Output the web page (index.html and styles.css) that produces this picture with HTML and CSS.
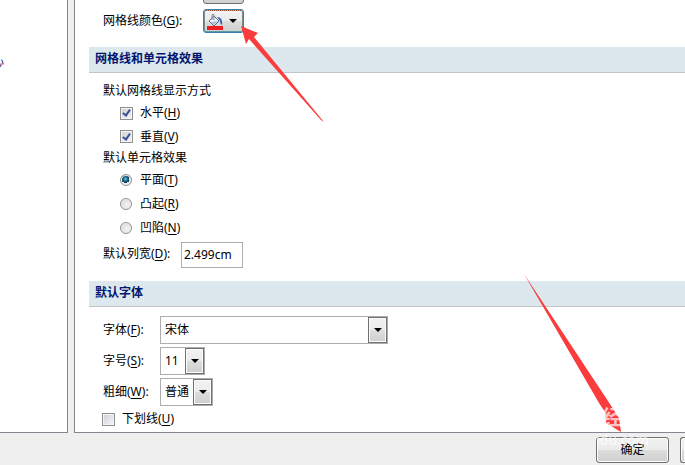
FILE: index.html
```html
<!DOCTYPE html>
<html lang="zh-CN">
    <head>
        <meta charset="utf-8">
        <title>选项</title>
        <link rel="stylesheet" href="styles.css">
    </head>
    <body>
        <div class="main">
            <div class="sidebar">
                <a class="nav-link" href="#">心</a>
            </div>
            <form class="panel" id="options">
                <div class="row color-row">
                    <span class="label color-label">网格线颜色(<u>G</u>):</span>
                    <div class="color-buttons">
                        <button type="button" class="color-button" aria-label="背景色"></button>
                        <button type="button" class="color-button focused" aria-label="网格线颜色">
                            <svg width="16" height="17" viewBox="0 0 16 17">
                                <path d="M2 8 L7 3 L12 8 L7 13 Z" fill="#eef4fb" stroke="#5b6c88"/>
                                <path d="M4 9 L7 12 L11 8 Z" fill="#a9bdd8"/>
                                <path d="M5 7 V2 Q6 0 7 2 V7" fill="none" stroke="#7c8694"/>
                                <path d="M10 4 Q16 4 15 12 Q13 11 13 8 Z" fill="#3763b5"/>
                                <rect x="0" y="13" width="16" height="4" fill="#ed1c24"/>
                            </svg>
                            <span class="arrow"></span>
                        </button>
                    </div>
                </div>

                <h2>网格线和单元格效果</h2>
                <div class="section effects">
                    <div class="group-label">默认网格线显示方式</div>
                    <label class="option"><input type="checkbox" checked><span>水平(<u>H</u>)</span></label>
                    <label class="option"><input type="checkbox" checked><span>垂直(<u>V</u>)</span></label>
                    <div class="group-label">默认单元格效果</div>
                    <label class="option"><input type="radio" name="effect" checked><span>平面(<u>T</u>)</span></label>
                    <label class="option"><input type="radio" name="effect"><span>凸起(<u>R</u>)</span></label>
                    <label class="option"><input type="radio" name="effect"><span>凹陷(<u>N</u>)</span></label>
                    <div class="row">
                        <label class="label width-label" for="colwidth">默认列宽(<u>D</u>):</label>
                        <input type="text" id="colwidth" value="2.499cm">
                    </div>
                </div>

                <h2>默认字体</h2>
                <div class="section fonts">
                    <div class="row">
                        <label class="label font-label" for="font">字体(<u>F</u>):</label>
                        <div class="combo wide"><select id="font"><option>宋体</option></select></div>
                    </div>
                    <div class="row">
                        <label class="label font-label" for="size">字号(<u>S</u>):</label>
                        <div class="combo size"><select id="size"><option>11</option></select></div>
                    </div>
                    <div class="row">
                        <label class="label font-label" for="weight">粗细(<u>W</u>):</label>
                        <div class="combo weight"><select id="weight"><option>普通</option></select></div>
                    </div>
                    <label class="option underline"><input type="checkbox"><span>下划线(<u>U</u>)</span></label>
                </div>
            </form>
        </div>
        <div class="footer">
            <button type="submit" form="options">确定</button>
            <button type="button" class="cancel" aria-label="取消"></button>
        </div>

        <svg class="pointer to-color" width="84" height="96" viewBox="0 0 84 96">
            <path d="M0 0 L17 7 L13 11 L83 96 L80 94 L8 13 L5 18 Z" fill="#fb3c3c"/>
        </svg>
        <svg class="pointer to-ok" width="98" height="160" viewBox="0 0 98 160">
            <path d="M0 0 L84 127 L95 144 L97 158 L82 149 L81 138 L75 129 Z" fill="#fb3c3c"/>
        </svg>
        <div class="watermark mark-char">经</div>
        <div class="watermark mark-url">idu.com</div>
    </body>
</html>
```

FILE: styles.css
```css
body {
    margin: 0;
    height: 100vh;
    display: flex;
    flex-direction: column;
    position: relative;
    overflow: hidden;
    background-color: #efefef;
    color: #000;
    font-family: "Noto Sans", "Noto Sans CJK SC", sans-serif;
    font-size: 12px;
    line-height: 20px;
}

input, select, button {
    font: inherit;
    color: inherit;
    box-sizing: border-box;
    margin: 0;
}

u {
    text-underline-offset: 2px;
}

.main {
    flex: 1;
    min-height: 0;
    display: flex;
    gap: 6px;
}

.sidebar {
    width: 67px;
    flex-shrink: 0;
    background-color: #fff;
    border-right: 1px solid #828790;
    border-bottom: 1px solid #828790;
    overflow: hidden;
}

.nav-link {
    display: block;
    margin: 52px 0 0 -8px;
    color: #00156e;
    text-decoration: none;
}

.panel {
    flex: 1;
    padding-left: 14px;
    background-color: #fff;
    border-left: 1px solid #828790;
    border-bottom: 1px solid #828790;
    overflow: hidden;
}

.row {
    display: flex;
    align-items: center;
}

.label {
    flex-shrink: 0;
    white-space: nowrap;
}

.color-row {
    height: 33px;
    align-items: flex-end;
    padding-left: 14px;
    margin-bottom: 14px;
}

.color-label {
    width: 100px;
    padding-bottom: 2px;
}

.color-buttons {
    display: flex;
    flex-direction: column;
    gap: 5px;
}

.color-button {
    display: flex;
    align-items: center;
    gap: 6px;
    width: 41px;
    height: 24px;
    flex-shrink: 0;
    padding: 0 0 0 3px;
    border: 1px solid #707070;
    border-radius: 3px;
    background: linear-gradient(#f2f2f2, #ebebeb 50%, #ddd 50%, #cfcfcf);
}

.focused {
    border-color: #3c7fb1;
    outline: 1px dotted #a0522d;
    outline-offset: -2px;
    box-shadow: inset 0 0 0 1px #46d0f5;
}

.arrow {
    border: 4px solid transparent;
    border-top-color: #000;
    border-bottom: 0;
}

h2 {
    margin: 0;
    padding: 2px 6px 3px;
    border-bottom: 1px solid #c0c4c8;
    background-color: #dde7ee;
    color: #00156e;
    font-size: 12px;
    line-height: 20px;
}

.section {
    padding: 8px 14px 0;
}

.effects {
    padding-bottom: 13px;
}

.option {
    display: flex;
    align-items: center;
    gap: 7px;
    height: 24px;
    margin-left: 17px;
}

.effects .option:has(+ .group-label) {
    height: 23px;
}

input[type="checkbox"] {
    appearance: none;
    display: grid;
    place-items: center;
    width: 13px;
    height: 13px;
    border: 1px solid #8e8f8f;
    background: linear-gradient(135deg, #cbcfd5, #f6f6f6);
    box-shadow: inset 0 0 0 1px #f4f4f4;
}

input[type="checkbox"]:checked::after {
    content: "";
    width: 3px;
    height: 6px;
    margin-bottom: 2px;
    border: solid #3c5297;
    border-width: 0 2px 2px 0;
    transform: rotate(35deg);
}

input[type="radio"] {
    appearance: none;
    width: 12px;
    height: 12px;
    margin-right: 1px;
    border: 1px solid #8e8f8f;
    border-radius: 50%;
    background: radial-gradient(circle at 60% 60%, #f8f8f8, #c8cbd0);
    box-shadow: inset 0 0 0 1px #f4f4f4;
}

input[type="radio"]:checked {
    background: radial-gradient(circle at 45% 40%, #7fd4f2 0, #1b6a94 2px, #10324a 4px, #e4e8ec 4px);
}

.width-label {
    width: 78px;
}

input[type="text"] {
    width: 62px;
    height: 26px;
    margin-top: 2px;
    padding: 0 2px 2px;
    border: 1px solid #abadb3;
    background-color: #fff;
}

.fonts {
    display: flex;
    flex-direction: column;
    gap: 3px;
    padding-top: 9px;
}

.font-label {
    width: 57px;
}

.combo {
    position: relative;
    height: 28px;
    box-sizing: border-box;
    border: 1px solid #abadb3;
}

.combo select {
    appearance: none;
    display: block;
    width: 100%;
    height: 100%;
    padding: 0 20px 0 4px;
    border: 0;
    background-color: #fff;
}

.combo::before {
    content: "";
    position: absolute;
    top: 0;
    right: 0;
    width: 17px;
    height: 24px;
    border: 1px solid #707070;
    background: linear-gradient(#f2f2f2, #ebebeb 50%, #ddd 50%, #cfcfcf);
    box-shadow: inset 0 0 0 1px #fcfcfc;
    pointer-events: none;
}

.combo::after {
    content: "";
    position: absolute;
    top: 11px;
    right: 5px;
    border: 4px solid transparent;
    border-top-color: #000;
    border-bottom: 0;
    pointer-events: none;
}

.wide {
    width: 228px;
}

.size {
    width: 45px;
}

.weight {
    width: 53px;
}

.underline {
    margin: -2px 0 0 -1px;
}

.footer {
    height: 32px;
    flex-shrink: 0;
    display: flex;
    justify-content: flex-end;
    gap: 11px;
    padding-top: 4px;
    box-sizing: border-box;
}

.footer button {
    width: 73px;
    height: 26px;
    padding: 0;
    border: 1px solid #707070;
    border-radius: 3px;
    background: linear-gradient(#f2f2f2, #ebebeb 50%, #ddd 50%, #cfcfcf);
    box-shadow: inset 0 0 0 1px #fcfcfc;
}

.footer .cancel {
    width: 5px;
    border-right: 0;
    border-radius: 3px 0 0 3px;
}

.pointer {
    position: absolute;
    pointer-events: none;
}

.to-color {
    left: 241px;
    top: 26px;
}

.to-ok {
    left: 524px;
    top: 274px;
}

.watermark {
    position: absolute;
    color: rgba(255, 255, 255, 0.7);
    pointer-events: none;
}

.mark-char {
    left: 602px;
    top: 408px;
    font-size: 20px;
    font-weight: bold;
}

.mark-url {
    left: 596px;
    top: 430px;
    font-size: 14px;
}
```
